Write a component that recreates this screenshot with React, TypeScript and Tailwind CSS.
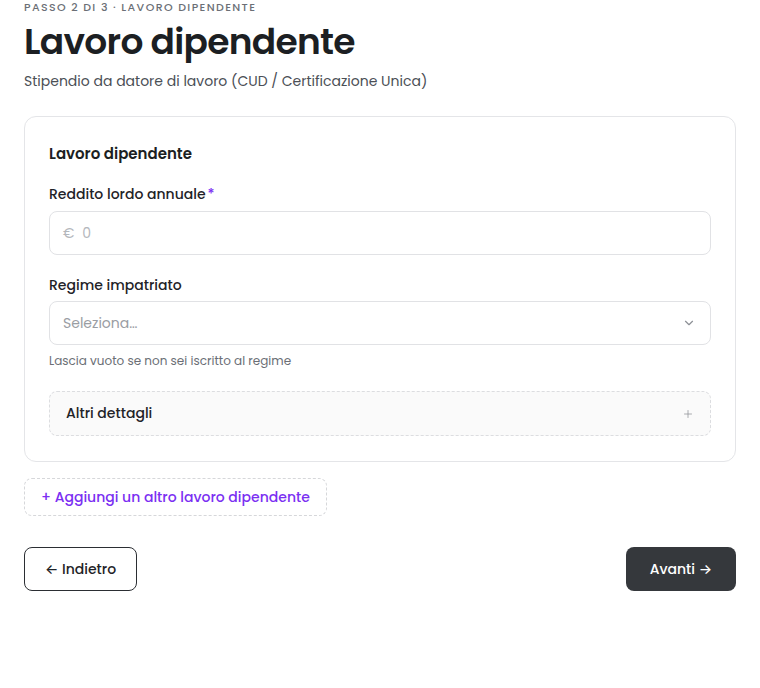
import { ChevronDown, Plus } from "lucide-react";

export default function App() {
  return (
    <div className="min-h-screen bg-white px-6 font-['Poppins','Inter',sans-serif] text-[#1f2328]">
      {/* Header */}
      <p className="pt-0 text-[11px] font-medium uppercase leading-[14px] tracking-[0.125em] text-[#6b6f76]">
        Passo 2 di 3 · Lavoro dipendente
      </p>
      <h1 className="mt-[6px] text-[36px] font-semibold leading-[44px] tracking-[-0.02em] text-[#1c1f23]">
        Lavoro dipendente
      </h1>
      <p className="mt-[7px] text-[14px] leading-[20px] text-[#4b4f56]">
        Stipendio da datore di lavoro (CUD / Certificazione Unica)
      </p>

      {/* Card */}
      <div className="mt-[25px] rounded-xl border border-[#e4e5e8] px-6 pb-[25px] pt-[27px]">
        <h2 className="text-[15px] font-semibold leading-[20px] text-[#1c1f23]">Lavoro dipendente</h2>

        <label className="mt-[20px] block text-[14px] font-medium leading-[20px] text-[#1f2328]">
          Reddito lordo annuale<span className="ml-[2px] text-[#7b2ff2]">*</span>
        </label>
        <div className="mt-[7px] flex h-[44px] items-center gap-[8px] rounded-lg border border-[#e1e2e5] px-[13px] text-[14px] text-[#b4b7bc]">
          <span>€</span>
          <span>0</span>
        </div>

        <label className="mt-[20px] block text-[14px] font-medium leading-[20px] text-[#1f2328]">
          Regime impatriato
        </label>
        <div className="mt-[6px] flex h-[44px] items-center justify-between rounded-lg border border-[#e1e2e5] pl-[13px] pr-[14px] text-[14px] text-[#9a9da3]">
          <span>Seleziona…</span>
          <ChevronDown size={14} strokeWidth={2} className="text-[#8d9096]" />
        </div>
        <p className="mt-[8px] text-[12px] leading-[16px] text-[#6b6f76]">Lascia vuoto se non sei iscritto al regime</p>

        <div className="mt-[22px] flex h-[45px] items-center justify-between rounded-lg border border-dashed border-[#dcdde0] bg-[#fafafa] pl-[16px] pr-[16px]">
          <span className="text-[14px] font-medium text-[#1f2328]">Altri dettagli</span>
          <Plus size={12} strokeWidth={1.5} className="text-[#8d9096]" />
        </div>
      </div>

      {/* Add another */}
      <button className="mt-[16px] flex h-[38px] items-center rounded-lg border border-dashed border-[#d6d7da] px-4 text-[14px] font-medium text-[#7b2ff2]">
        + Aggiungi un altro lavoro dipendente
      </button>

      {/* Nav */}
      <div className="mt-[31px] flex items-center justify-between">
        <button className="flex h-[44px] items-center rounded-lg border border-[#2b2e33] px-[20px] text-[14px] font-medium text-[#1f2328]">
          ← Indietro
        </button>
        <button className="flex h-[44px] items-center rounded-lg bg-[#35383c] px-6 text-[14px] font-medium text-white">
          Avanti →
        </button>
      </div>
    </div>
  );
}
